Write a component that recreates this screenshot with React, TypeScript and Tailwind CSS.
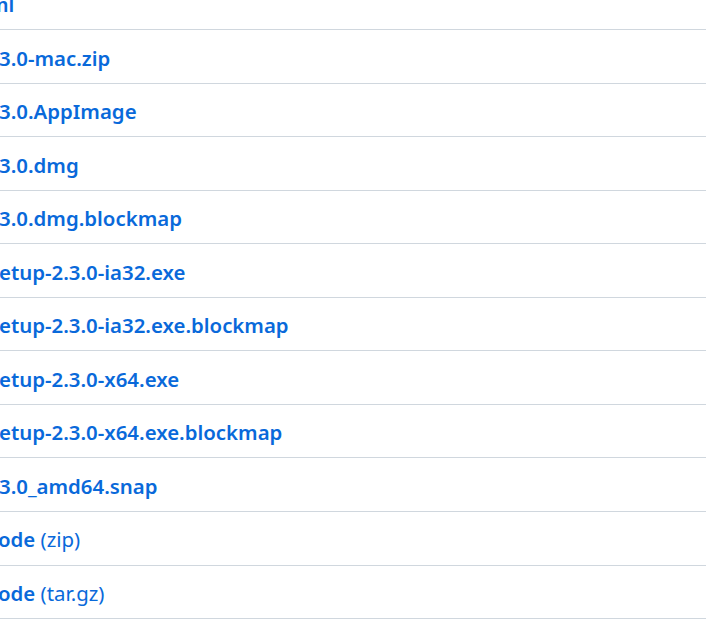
const assets = [
  { name: "ml", shift: "-ml-[11px]" },
  { name: "3.0-mac.zip", shift: "-ml-[1px]" },
  { name: "3.0.AppImage", shift: "-ml-[1px]" },
  { name: "3.0.dmg", shift: "-ml-[1px]" },
  { name: "3.0.dmg.blockmap", shift: "-ml-[1px]" },
  { name: "etup-2.3.0-ia32.exe", shift: "-ml-[1px]" },
  { name: "etup-2.3.0-ia32.exe.blockmap", shift: "-ml-[1px]" },
  { name: "etup-2.3.0-x64.exe", shift: "-ml-[1px]" },
  { name: "etup-2.3.0-x64.exe.blockmap", shift: "-ml-[1px]" },
  { name: "3.0_amd64.snap", shift: "-ml-[1px]" },
  { name: "ode", kind: "(zip)", shift: "-ml-[2px]" },
  { name: "ode", kind: "(tar.gz)", shift: "-ml-[2px]" },
];

export default function App() {
  return (
    <div className="h-[638px] w-[706px] overflow-hidden bg-white font-['Noto_Sans',sans-serif] text-[20.4px] text-[#0969da]">
      <ul className="-mt-[23.5px]">
        {assets.map((a, i) => (
          <li
            key={i}
            className="flex h-[53.55px] items-center overflow-hidden border-b border-[#d0d7de] pt-[3px]"
          >
            <a href="#" className={`whitespace-nowrap ${a.shift}`}>
              <span className="font-semibold">{a.name}</span>
              {a.kind && <span className="font-normal"> {a.kind}</span>}
            </a>
          </li>
        ))}
      </ul>
    </div>
  );
}
